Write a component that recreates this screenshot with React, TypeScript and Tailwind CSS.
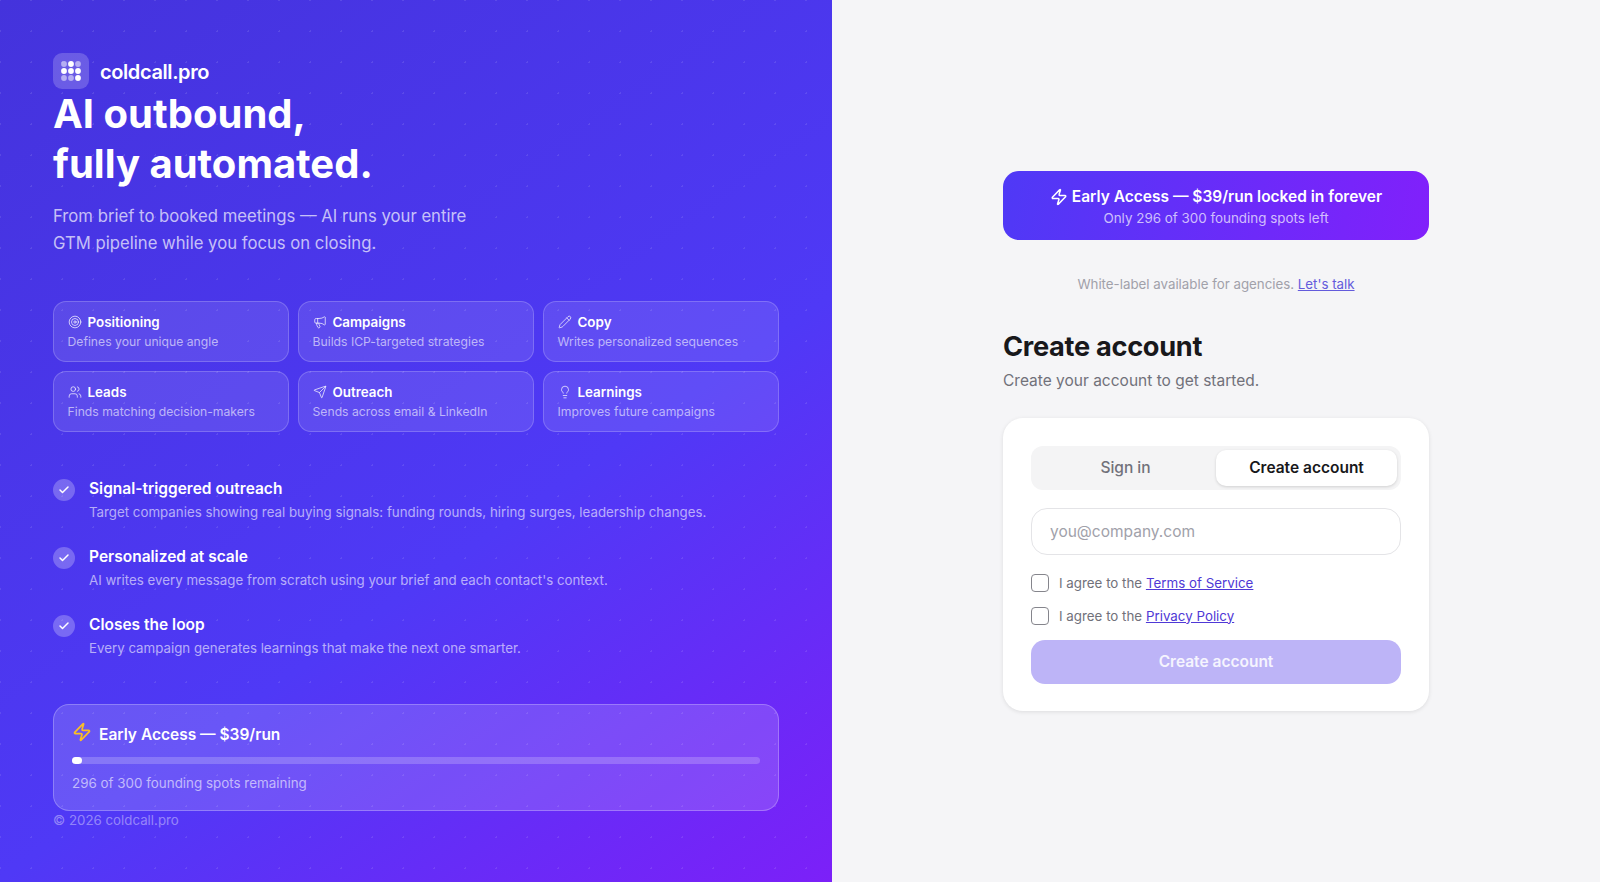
import { Check, Lightbulb, Megaphone, Pencil, Send, Target, Users, Zap } from 'lucide-react';

const agents = [
  { icon: Target, title: 'Positioning', text: 'Defines your unique angle' },
  { icon: Megaphone, title: 'Campaigns', text: 'Builds ICP-targeted strategies' },
  { icon: Pencil, title: 'Copy', text: 'Writes personalized sequences' },
  { icon: Users, title: 'Leads', text: 'Finds matching decision-makers' },
  { icon: Send, title: 'Outreach', text: 'Sends across email & LinkedIn' },
  { icon: Lightbulb, title: 'Learnings', text: 'Improves future campaigns' },
];

const features = [
  {
    title: 'Signal-triggered outreach',
    text: 'Target companies showing real buying signals: funding rounds, hiring surges, leadership changes.',
  },
  {
    title: 'Personalized at scale',
    text: "AI writes every message from scratch using your brief and each contact's context.",
  },
  {
    title: 'Closes the loop',
    text: 'Every campaign generates learnings that make the next one smarter.',
  },
];

function LogoMark() {
  const dots = [0.5, 1, 0.5, 1, 1, 1, 0.5, 0.5, 1];
  return (
    <svg width="20" height="20" viewBox="0 0 20 20" fill="white">
      {dots.map((opacity, i) => (
        <circle key={i} cx={3 + (i % 3) * 7} cy={3 + Math.floor(i / 3) * 7} r="2.9" opacity={opacity} />
      ))}
    </svg>
  );
}

function Agreement({ label }: { label: string }) {
  return (
    <label className="flex items-center gap-[10px] text-[13.35px] leading-[18px] text-[#71717a]">
      <input
        type="checkbox"
        className="h-[18px] w-[18px] shrink-0 appearance-none rounded-[4px] border-[1.5px] border-[#85858c] bg-white"
      />
      <span className="-mt-[1px]">
        I agree to the <a className="text-[#4f39d6] underline">{label}</a>
      </span>
    </label>
  );
}

export default function App() {
  return (
    <div className="flex h-[882px] bg-white font-['Inter',sans-serif]">
      {/* Left marketing panel */}
      <div className="relative w-[832px] shrink-0 bg-[linear-gradient(145deg,#4433dc_0%,#4f39f6_60%,#7c20f8_100%)]">
        <div className="absolute inset-0 bg-[radial-gradient(rgba(255,255,255,0.1)_1px,transparent_1px)] bg-[size:31px_31px] bg-[position:-15px_-15px]" />
        <div className="relative flex flex-col px-[53px] pt-[53px]">
          <div className="flex items-center gap-[11px]">
            <div className="flex h-[36px] w-[36px] items-center justify-center rounded-[9px] bg-white/20">
              <LogoMark />
            </div>
            <span className="mt-[1px] text-[20px] font-semibold tracking-[-0.4px] text-white">coldcall.pro</span>
          </div>

          <h1 className="text-[40px] leading-[50px] font-bold text-white">
            AI outbound,
            <br />
            fully automated.
          </h1>
          <p className="mt-[14px] text-[16.7px] leading-[27px] text-white/70">
            From brief to booked meetings — AI runs your entire
            <br />
            GTM pipeline while you focus on closing.
          </p>

          <div className="mt-[44px] grid grid-cols-3 gap-[9px]">
            {agents.map((agent) => (
              <div
                key={agent.title}
                className="h-[61px] rounded-[13px] border border-white/20 bg-white/10 px-[13.5px] pt-[11px]"
              >
                <div className="flex items-center gap-[6px] text-[13.4px] leading-[18px] font-semibold text-white">
                  <agent.icon size={14} strokeWidth={1.5} className="text-white/80" />
                  {agent.title}
                </div>
                <p className="mt-[1px] text-[12.2px] leading-[19px] text-white/60">{agent.text}</p>
              </div>
            ))}
          </div>

          <div className="mt-[46px] flex flex-col gap-[23px]">
            {features.map((feature) => (
              <div key={feature.title} className="flex gap-[14px]">
                <div className="mt-[1px] flex h-[22px] w-[22px] shrink-0 items-center justify-center rounded-full bg-white/25">
                  <Check size={12} strokeWidth={3} className="text-white" />
                </div>
                <div>
                  <div className="text-[15.5px] leading-[22px] font-semibold text-white">{feature.title}</div>
                  <p className="mt-[2px] text-[13.3px] leading-[21px] text-white/60">{feature.text}</p>
                </div>
              </div>
            ))}
          </div>

          <div className="mt-[45px] h-[107px] rounded-[16px] border border-white/25 bg-white/15 px-[18px] pt-[17px]">
            <div className="flex items-center gap-[7px] text-[15.5px] leading-[26px] font-semibold text-white">
              <Zap size={20} strokeWidth={2} className="-mt-[6px] text-[#fbbf24]" />
              Early Access — $39/run
            </div>
            <div className="mt-[9px] h-[7px] rounded-full bg-white/20">
              <div className="h-[7px] w-[10px] rounded-full bg-white" />
            </div>
            <p className="mt-[9px] text-[13.4px] leading-[21px] text-white/60">296 of 300 founding spots remaining</p>
          </div>

          <p className="text-[13.3px] leading-[18px] text-white/40">© 2026 coldcall.pro</p>
        </div>
      </div>

      {/* Right form panel */}
      <div className="flex flex-1 items-center justify-center bg-[#f5f5f7]">
        <div className="w-[426px]">
          <div className="rounded-[16px] bg-[linear-gradient(100deg,#4f39f6,#8120fb)] pt-[14px] pb-[12px] text-center">
            <div className="flex items-center justify-center gap-[4px] text-[15.5px] leading-[24px] font-semibold text-white">
              <Zap size={18} strokeWidth={2} />
              Early Access — $39/run locked in forever
            </div>
            <p className="-mt-[1px] text-[13.4px] leading-[20px] text-white/70">Only 296 of 300 founding spots left</p>
          </div>

          <p className="mt-[35px] text-center text-[13.3px] leading-[18px] text-[#a1a1aa]">
            White-label available for agencies. <a className="text-[#635bdc] underline">Let's talk</a>
          </p>

          <h2 className="mt-[36px] text-[27.2px] leading-[36px] font-bold tracking-[-0.3px] text-[#18181b]">
            Create account
          </h2>
          <p className="mt-[4px] text-[15.5px] leading-[24px] text-[#71717a]">Create your account to get started.</p>

          <div className="mt-[25px] rounded-[20px] bg-white px-[28px] pt-[28px] pb-[27px] shadow-[0_1px_4px_rgba(0,0,0,0.1)]">
            <div className="flex h-[44px] items-center rounded-[12px] bg-[#f4f4f5] px-[4px]">
              <button className="h-[36px] flex-1 text-[15.5px] font-medium text-[#71717a]">Sign in</button>
              <button className="h-[36px] flex-1 rounded-[10px] bg-white text-[15.5px] font-semibold text-[#18181b] shadow-[0_1px_3px_rgba(0,0,0,0.15)]">
                Create account
              </button>
            </div>
            <input
              placeholder="you@company.com"
              className="mt-[18px] h-[47px] w-full rounded-[16px] border border-[#e4e4e7] bg-white px-[18px] text-[15.5px] placeholder:text-[#a1a1aa] outline-none"
            />
            <div className="mt-[19px] flex flex-col gap-[15px]">
              <Agreement label="Terms of Service" />
              <Agreement label="Privacy Policy" />
            </div>
            <button className="mt-[15px] h-[44px] w-full rounded-[14px] bg-[#bdb4f7] text-[15.5px] font-semibold text-white/85">
              Create account
            </button>
          </div>
        </div>
      </div>
    </div>
  );
}
